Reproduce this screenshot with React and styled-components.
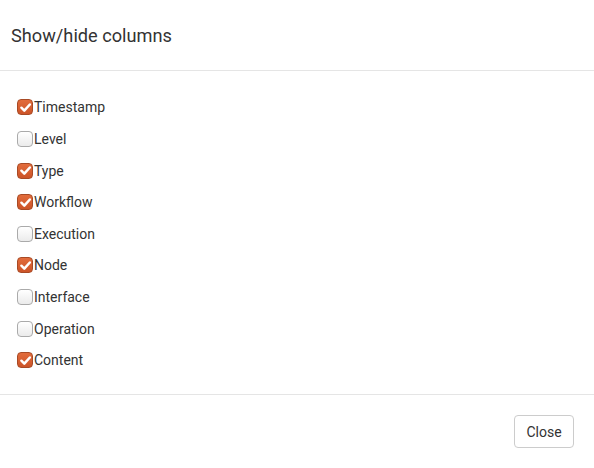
import React, { useState } from "react";
import styled, { createGlobalStyle } from "styled-components";

const GlobalStyle = createGlobalStyle`
  html, body {
    margin: 0;
    padding: 0;
    background: #fff;
  }
  body {
    font-family: Roboto, "Liberation Sans", sans-serif;
    color: #333;
  }
`;

const columns = [
  { name: "Timestamp", on: true },
  { name: "Level", on: false },
  { name: "Type", on: true },
  { name: "Workflow", on: true },
  { name: "Execution", on: false },
  { name: "Node", on: true },
  { name: "Interface", on: false },
  { name: "Operation", on: false },
  { name: "Content", on: true },
];

const App = () => {
  const [state, setState] = useState(columns);

  const toggle = (i) =>
    setState((s) => s.map((c, j) => (j === i ? { ...c, on: !c.on } : c)));

  return (
    <Modal>
      <GlobalStyle />
      <Header>
        <Title>Show/hide columns</Title>
      </Header>
      <Body>
        {state.map((c, i) => (
          <Row key={c.name} onClick={() => toggle(i)}>
            <Box checked={c.on}>
              {c.on && (
                <svg width="13" height="13" viewBox="0 0 12 12">
                  <path
                    d="M2.2 6.2 L4.9 8.9 L10 3.2"
                    fill="none"
                    stroke="#fff"
                    strokeWidth="2.3"
                    strokeLinecap="round"
                    strokeLinejoin="round"
                  />
                </svg>
              )}
            </Box>
            <span>{c.name}</span>
          </Row>
        ))}
      </Body>
      <Footer>
        <Button>Close</Button>
      </Footer>
    </Modal>
  );
};

export default App;

const Modal = styled.div`
  width: 594px;
  height: 468px;
  background: #fff;
  display: flex;
  flex-direction: column;
`;

const Header = styled.div`
  height: 71px;
  box-sizing: border-box;
  padding: 0 11px;
  display: flex;
  align-items: center;
  border-bottom: 1px solid #e5e5e5;
`;

const Title = styled.h4`
  margin: 0;
  font-size: 18.2px;
  font-weight: 400;
  color: #333;
  position: relative;
  top: 1px;
`;

const Body = styled.div`
  padding: 19px 17px 20px;
  border-bottom: 1px solid #e5e5e5;
`;

const Row = styled.label`
  display: flex;
  align-items: center;
  height: 31.6px;
  font-size: 14px;
  color: #333;
  cursor: pointer;

  span {
    position: relative;
    top: 2px;
  }
`;

const Box = styled.span`
  width: 16px;
  height: 16px;
  box-sizing: border-box;
  border-radius: 4px;
  display: flex;
  align-items: center;
  justify-content: center;
  margin-right: 1px;
  position: relative;
  top: -2px;
  border: 1px solid ${({ checked }) => (checked ? "#a84a25" : "#aaa")};
  background: ${({ checked }) =>
    checked
      ? "linear-gradient(#e26c3c, #cc5428)"
      : "linear-gradient(#fff, #ebebeb)"};
`;

const Footer = styled.div`
  display: flex;
  justify-content: flex-end;
  padding: 20px 20px;
`;

const Button = styled.button`
  font-family: Roboto, "Liberation Sans", sans-serif;
  font-size: 14px;
  color: #333;
  background: #fff;
  border: 1px solid #ccc;
  border-radius: 4px;
  width: 60px;
  height: 33px;
  padding: 0;
  cursor: pointer;
`;
